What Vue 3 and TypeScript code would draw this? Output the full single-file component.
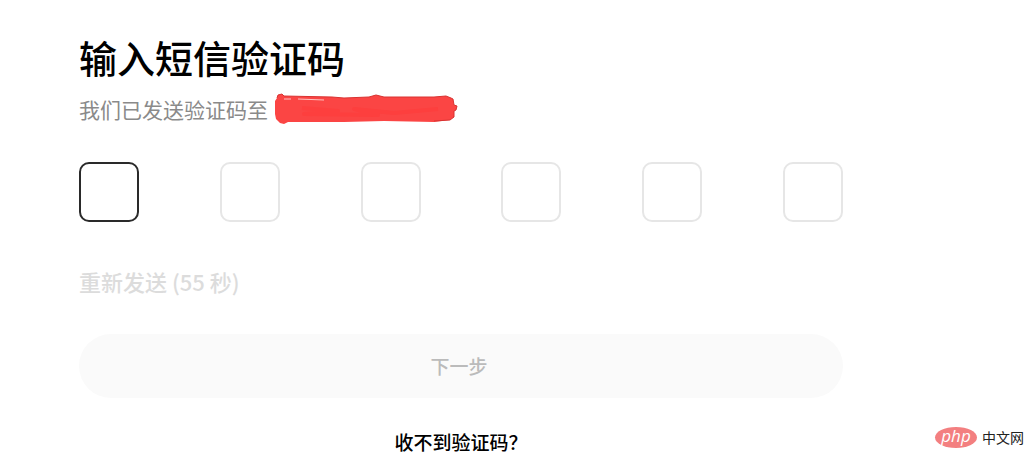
<script setup lang="ts">
import { ref } from 'vue'

const digits = ref<string[]>(['', '', '', '', '', ''])
const seconds = ref(55)
</script>

<template>
  <main class="page">
    <form class="verify" @submit.prevent>
      <h1>输入短信验证码</h1>
      <p class="sent">
        <span>我们已发送验证码至</span>
        <svg class="redaction" viewBox="0 0 184 32" aria-hidden="true">
          <path
            fill="#fb4544"
            d="M3 5 L4 2 L8 1 L10 3 L58 4 L70 5 L95 4 L102 2 L110 4 L160 4 L172 3 L177 5 L179 6 L180 12 L183 13 L182 17 L180 18 L180 24 L176 27 L160 29 L110 28 L70 29 L14 29 L10 31 L6 30 L2 26 L1 21 L1 8 Z"
          />
          <path
            fill="none"
            stroke="#d93331"
            d="M3 5 L4 2 L8 1 L10 3 L58 4 L70 5 L95 4 L102 2 L110 4 L160 4 L172 3 L177 5 L179 6 L180 12 L183 13 L182 17 L180 18 L180 24 L176 27 L160 28"
          />
          <path fill="none" stroke="#fd3f3e" stroke-width="4" stroke-linejoin="round" d="M28 15 L64 18 L30 21 L104 22 L80 16 L120 20 L164 16" />
          <path fill="none" stroke="#ffc0bd" d="M10 6 L17 6 M24 6 L50 7" />
        </svg>
      </p>
      <div class="codes" role="group" aria-label="短信验证码">
        <input
          v-for="(_, i) in digits"
          :key="i"
          v-model="digits[i]"
          :class="{ active: i === 0 }"
          type="text"
          inputmode="numeric"
          maxlength="1"
          :aria-label="`验证码第 ${i + 1} 位`"
        />
      </div>
      <button class="resend" type="button" disabled>重新发送 ({{ seconds }} 秒)</button>
      <button class="next" type="submit" disabled>下一步</button>
      <a class="help" href="#help">收不到验证码？</a>
    </form>
    <a class="brand" href="#home"><span class="php">php</span><span>中文网</span></a>
  </main>
</template>

<style>
body {
  margin: 0;
  background: #fff;
}
</style>

<style scoped>
.page {
  position: relative;
  box-sizing: border-box;
  min-height: 100vh;
  padding: 29px 181px 0 79px;
  font-family: "Noto Sans CJK SC", sans-serif;
  color: #000;
}
.verify {
  display: flex;
  flex-direction: column;
}
h1 {
  margin: 0;
  font-size: 38px;
  line-height: 56px;
  font-weight: 500;
}
.sent {
  display: flex;
  align-items: center;
  margin: 6px 0 0;
  height: 36px;
  font-size: 21px;
  line-height: 36px;
  color: #8a8a8a;
}
.redaction {
  width: 184px;
  height: 32px;
  margin-left: 6px;
}
.codes {
  display: flex;
  justify-content: space-between;
  margin-top: 35px;
}
.codes input {
  box-sizing: border-box;
  width: 60px;
  height: 60px;
  padding: 0;
  border: 2px solid #e6e6e6;
  border-radius: 10px;
  outline: none;
  background: #fff;
  font: inherit;
  font-size: 28px;
  text-align: center;
}
.codes input.active {
  border-color: #2a2a2a;
}
button {
  border: 0;
  padding: 0;
  font-family: inherit;
}
.resend {
  align-self: flex-start;
  margin-top: 43px;
  background: none;
  font-size: 22px;
  line-height: 32px;
  font-weight: 500;
  color: #dcdcdc;
}
.next {
  height: 64px;
  margin-top: 37px;
  padding: 0 4px 2px 0;
  border-radius: 32px;
  background: #fafafa;
  font-size: 19px;
  font-weight: 500;
  color: #bbb;
}
.help {
  align-self: center;
  margin-top: 28px;
  font-size: 19px;
  line-height: 32px;
  font-weight: 500;
  color: #000;
  text-decoration: none;
}
.brand {
  position: absolute;
  right: 0;
  bottom: 12px;
  display: flex;
  align-items: center;
  gap: 5px;
  font-size: 14px;
  line-height: 22px;
  color: #222;
  text-decoration: none;
}
.php {
  width: 42px;
  height: 21px;
  border-radius: 50%;
  background: #f37f80;
  color: #fff;
  font: italic 17px/18px "Open Sans", sans-serif;
  text-align: center;
}
</style>
